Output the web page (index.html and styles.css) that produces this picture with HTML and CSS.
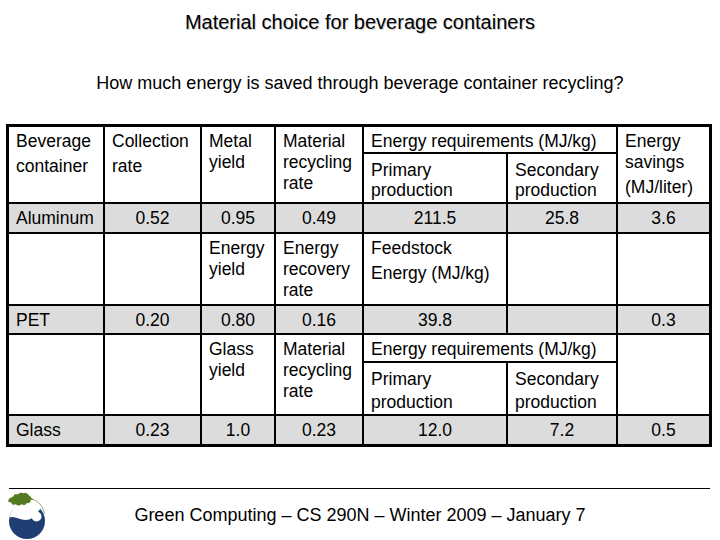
FILE: index.html
```html
<!DOCTYPE html>
<html lang="en">
<head>
<meta charset="utf-8">
<title>Material choice for beverage containers</title>
<link rel="stylesheet" href="styles.css">
</head>
<body>
<div class="slide">
  <h1 class="title">Material choice for beverage containers</h1>
  <p class="subtitle">How much energy is saved through beverage container recycling?</p>

  <div class="tbl">
    <!-- aluminum header -->
    <div class="c r2 lh25">Beverage container</div>
    <div class="c r2 lh25">Collection rate</div>
    <div class="c r2">Metal yield</div>
    <div class="c r2">Material recycling rate</div>
    <div class="c s2">Energy requirements (MJ/kg)</div>
    <div class="c r2 nr"><span class="ln">Energy</span><span class="ln">savings</span><span class="ln gap">(MJ/liter)</span></div>
    <div class="c sub1">Primary production</div>
    <div class="c sub1">Secondary production</div>

    <div class="c d l">Aluminum</div>
    <div class="c d">0.52</div>
    <div class="c d">0.95</div>
    <div class="c d">0.49</div>
    <div class="c d">211.5</div>
    <div class="c d">25.8</div>
    <div class="c d nr">3.6</div>

    <!-- PET header -->
    <div class="c"></div>
    <div class="c"></div>
    <div class="c">Energy yield</div>
    <div class="c">Energy recovery rate</div>
    <div class="c lh25">Feedstock Energy (MJ/kg)</div>
    <div class="c"></div>
    <div class="c nr"></div>

    <div class="c d l">PET</div>
    <div class="c d">0.20</div>
    <div class="c d">0.80</div>
    <div class="c d">0.16</div>
    <div class="c d">39.8</div>
    <div class="c d"></div>
    <div class="c d nr">0.3</div>

    <!-- glass header -->
    <div class="c r2"></div>
    <div class="c r2"></div>
    <div class="c r2">Glass yield</div>
    <div class="c r2">Material recycling rate</div>
    <div class="c s2">Energy requirements (MJ/kg)</div>
    <div class="c r2 nr"></div>
    <div class="c sub2">Primary production</div>
    <div class="c sub2">Secondary production</div>

    <div class="c d l nb">Glass</div>
    <div class="c d nb">0.23</div>
    <div class="c d nb">1.0</div>
    <div class="c d nb">0.23</div>
    <div class="c d nb">12.0</div>
    <div class="c d nb">7.2</div>
    <div class="c d nb nr">0.5</div>
  </div>

  <div class="rule"></div>

  <div class="footer">
    <svg class="logo" width="40" height="48" viewBox="0 0 40 48" aria-hidden="true">
      <circle cx="19" cy="30" r="18" fill="#1f3f74"/>
      <path d="M1.4,26.5 C7,24 13,30.5 21,28.5 C26,27 29.5,21.5 32.6,17.3 A18,18 0 0 0 1.4,26.5 Z" fill="#ffffff"/>
      <circle cx="28.5" cy="25.5" r="5" fill="#ffffff"/>
      <path d="M23,8 C30,9 35,15 36.6,23" fill="none" stroke="#9aa884" stroke-width="1"/>
      <path d="M0.5,9 C1.5,6 4.5,7 5.5,5 C6.5,2 9.5,4 10.5,3 C12.5,0 15.5,3 16.5,2 C18.5,1 20.5,4 21.5,5 C23.5,6 24.5,8 22.5,9 C23.5,11 20.5,13 18.5,12 C17.5,15 14.5,14 13.5,13 C11.5,16 8.5,14 7.5,13 C5.5,15 2.5,13 3.5,11 C1.5,12 -0.5,11 0.5,9 Z" fill="#557b22"/>
      <path d="M21,8 L25,8.5" stroke="#557b22" stroke-width="1.2"/>
    </svg>
    <div class="ftext">Green Computing – CS 290N – Winter 2009 – January 7</div>
    <div></div>
  </div>
</div>
</body>
</html>
```

FILE: styles.css
```css
* { box-sizing: border-box; }

html, body {
  margin: 0;
  padding: 0;
  background: #ffffff;
}

body {
  font-family: "Liberation Sans", Arial, sans-serif;
  color: #000;
}

.slide {
  width: 720px;
  height: 540px;
  overflow: hidden;
}

.title {
  margin: 10px 0 0;
  font-size: 20px;
  font-weight: normal;
  line-height: 24px;
  text-align: center;
  text-shadow: 1px 1px 0 #d0d0d0;
}

.subtitle {
  margin: 38px 0 0;
  font-size: 18px;
  line-height: 22px;
  text-align: center;
}

.tbl {
  display: grid;
  width: max-content;
  margin: 30px 0 0 6px;
  border: 3px solid #000;
  grid-template-columns: 96px 97px 74px 88px 144px 110px 91px;
  grid-template-rows: 27px 50px 30px 72px 29px 28px 53px 28px;
  font-size: 17.5px;
}

.c {
  background: #fff;
  border-right: 2px solid #000;
  border-bottom: 2px solid #000;
  padding: 4px 4px 0 7px;
  line-height: 21px;
  overflow: hidden;
}

.nr { border-right: 0; }
.nb { border-bottom: 0; }

.r2 { grid-row: span 2; }
.s2 { grid-column: span 2; }

.lh25 {
  line-height: 25px;
  padding-top: 2px;
}

.ln { display: block; }
.ln.gap { padding-top: 4px; }

.sub1 {
  line-height: 20px;
  padding-top: 6px;
}

.sub2 {
  line-height: 23px;
  padding-top: 5px;
}

.d {
  background: #dcdcdc;
  display: flex;
  align-items: center;
  justify-content: center;
  padding: 0;
  line-height: 20px;
}

.d.l {
  justify-content: flex-start;
  padding-left: 7px;
}

.rule {
  margin: 41px 10px 0 9px;
  border-top: 1px solid #000;
}

.footer {
  display: grid;
  grid-template-columns: 1fr auto 1fr;
  align-items: center;
  margin-top: 2px;
}

.logo {
  display: block;
  margin-left: 8px;
}

.ftext {
  font-size: 18px;
  line-height: 22px;
}
```
